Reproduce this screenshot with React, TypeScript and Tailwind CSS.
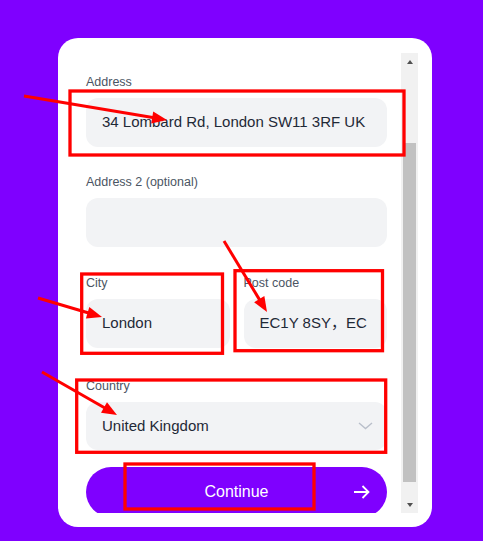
import React from "react";

type Pt = [number, number];

function Arrow({ from, to }: { from: Pt; to: Pt }) {
  const [x1, y1] = from;
  const [x2, y2] = to;
  const dx = x2 - x1;
  const dy = y2 - y1;
  const len = Math.hypot(dx, dy);
  const ux = dx / len;
  const uy = dy / len;
  const hl = 15;
  const hw = 6;
  const bx = x2 - ux * hl;
  const by = y2 - uy * hl;
  const p1 = `${x2},${y2}`;
  const p2 = `${bx - uy * hw},${by + ux * hw}`;
  const p3 = `${bx + uy * hw},${by - ux * hw}`;
  return (
    <g>
      <line x1={x1} y1={y1} x2={bx + ux * 2} y2={by + uy * 2} stroke="#ff0000" strokeWidth={3} />
      <polygon points={`${p1} ${p2} ${p3}`} fill="#ff0000" />
    </g>
  );
}

function Field({
  label,
  value,
  className = "",
  h = "h-[49px]",
}: {
  label: string;
  value?: string;
  className?: string;
  h?: string;
}) {
  return (
    <div className={`flex flex-col ${className}`}>
      <div className="text-[12.5px] leading-4 text-[#4b5563]">{label}</div>
      <div
        className={`mt-2 ${h} rounded-xl bg-[#f2f3f5] flex items-center px-4 text-[15px] text-[#1f2937] whitespace-nowrap overflow-hidden`}
      >
        {value}
      </div>
    </div>
  );
}

export default function App() {
  return (
    <div className="relative w-[483px] h-[541px] bg-[#7f00ff] overflow-hidden font-['Liberation_Sans','Noto_Sans_CJK_SC',sans-serif]">
      <div className="pl-[58px] pt-[38px]">
        <div className="w-[374px] h-[489px] bg-white rounded-[20px] pt-[15px] pb-[14px] px-[14px] flex">
          {/* scroll viewport */}
          <div className="w-[329px] h-[460px] overflow-hidden px-[14px] pt-[21px]">
            <Field label="Address" value="34 Lombard Rd, London SW11 3RF UK" />
            <Field label="Address 2 (optional)" className="mt-[27px]" />
            <div className="mt-[28px] grid grid-cols-2 gap-[14px]">
              <Field label="City" value="London" />
              <Field label="Post code" value="EC1Y 8SY，EC" />
            </div>
            <div className="mt-[30px] flex flex-col">
              <div className="text-[12.5px] leading-4 text-[#4b5563]">Country</div>
              <div className="mt-2 h-[48px] rounded-xl bg-[#f2f3f5] flex items-center justify-between pl-4 pr-[14px] text-[15px] text-[#1f2937]">
                <span>United Kingdom</span>
                <svg width="15" height="8" viewBox="0 0 15 8" fill="none">
                  <path d="M1 1 L7.5 6.5 L14 1" stroke="#b9bfca" strokeWidth="1.4" />
                </svg>
              </div>
            </div>
            <button className="mt-[17px] w-full h-[50px] rounded-full bg-[#7f00ff] grid grid-cols-[1fr_auto_1fr] items-center text-white text-[16px] font-medium">
              <span />
              <span>Continue</span>
              <span className="flex justify-end pr-[17px]">
                <svg width="17" height="14" viewBox="0 0 17 14" fill="none">
                  <path d="M1 7 H15.5 M9.5 1 L15.5 7 L9.5 13" stroke="white" strokeWidth="1.8" />
                </svg>
              </span>
            </button>
            <div className="h-[40px]" />
          </div>
          {/* scrollbar */}
          <div className="w-[17px] h-[460px] bg-[#f1f1f1] flex flex-col">
            <div className="h-[17px] flex items-center justify-center">
              <div className="w-0 h-0 border-x-[3.5px] border-x-transparent border-b-[4px] border-b-[#505050]" />
            </div>
            <div className="flex-1 px-[2px]">
              <div className="mt-[73px] h-[339px] bg-[#c1c1c1]" />
            </div>
            <div className="h-[17px] flex items-center justify-center">
              <div className="w-0 h-0 border-x-[3.5px] border-x-transparent border-t-[4px] border-t-[#505050]" />
            </div>
          </div>
        </div>
      </div>

      {/* annotation overlay */}
      <svg className="absolute inset-0 pointer-events-none" width="483" height="541" viewBox="0 0 483 541">
        <g fill="none" stroke="#ff0000" strokeWidth="3.3">
          <rect x="70" y="91" width="334" height="64" />
          <rect x="81.7" y="274" width="140.8" height="79.3" />
          <rect x="235" y="270.7" width="147.5" height="80" />
          <rect x="76.7" y="380" width="309" height="72.3" />
          <rect x="125" y="464" width="189" height="45" />
        </g>
        <Arrow from={[24, 96]} to={[167, 120]} />
        <Arrow from={[224, 241]} to={[267, 312]} />
        <Arrow from={[38, 298]} to={[102, 317]} />
        <Arrow from={[42, 372]} to={[117, 415]} />
      </svg>
    </div>
  );
}
